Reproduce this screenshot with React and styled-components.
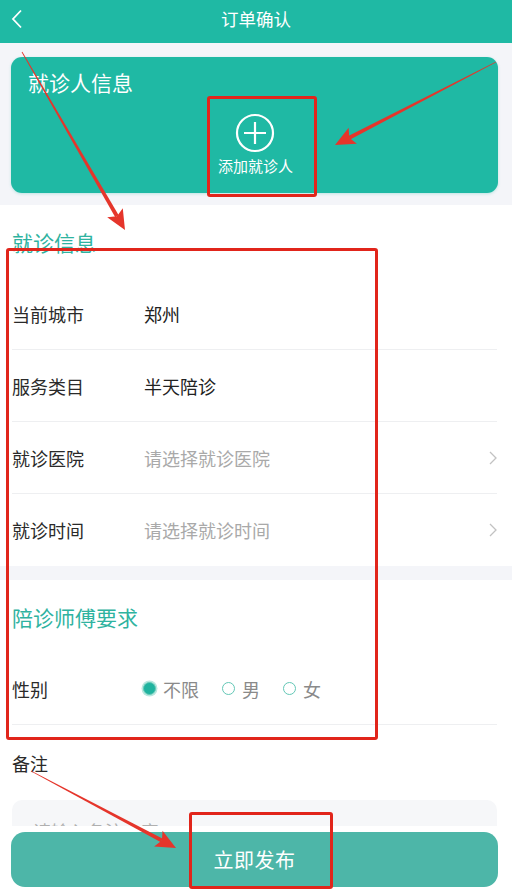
import React from "react";
import styled, { createGlobalStyle } from "styled-components";

const Global = createGlobalStyle`
  html, body { margin: 0; padding: 0; background: #fff; }
  body { font-family: "Noto Sans CJK SC", "Noto Sans", sans-serif; }
  * { box-sizing: border-box; }
`;

const TEAL = "#1fb9a4";

const Page = styled.div`
  position: relative;
  width: 512px;
  height: 891px;
  display: flex;
  flex-direction: column;
  overflow: hidden;
  background: #fff;
`;

const Header = styled.header`
  height: 43px;
  flex: none;
  background: ${TEAL};
  display: grid;
  grid-template-columns: 60px 1fr 60px;
  align-items: center;
  color: #fff;
`;

const BackBtn = styled.div`
  padding-left: 11px;
  display: flex;
  align-items: center;
  padding-bottom: 5px;
`;

const Title = styled.h1`
  margin: 0;
  text-align: center;
  font-size: 17.5px;
  font-weight: 400;
  line-height: 24px;
  padding-bottom: 6px;
`;

const Main = styled.main`
  flex: 1;
  overflow: hidden;
`;

const TopArea = styled.section`
  background: #f4f5f9;
  padding: 14px 14px 12px 11px;
`;

const PatientCard = styled.div`
  height: 136px;
  background: ${TEAL};
  border-radius: 11px;
  padding: 12px 17px 0;
  display: flex;
  flex-direction: column;
  color: #fff;
  box-shadow: 0 1px 3px rgba(31, 185, 164, 0.25);
`;

const CardTitle = styled.div`
  font-size: 21px;
  line-height: 26px;
`;

const AddPatient = styled.div`
  margin-top: 18px;
  align-self: center;
  display: flex;
  flex-direction: column;
  align-items: center;
  gap: 3px;
  margin-left: 2px;
`;

const AddText = styled.span`
  font-size: 15px;
  line-height: 20px;
`;

const SectionTitle = styled.div`
  height: 73px;
  padding-left: 12px;
  display: flex;
  align-items: center;
  font-size: 21px;
  color: #2fb3a0;
`;

const Row = styled.div`
  height: 72px;
  margin: 0 15px 0 12px;
  display: flex;
  align-items: center;
  border-bottom: ${(p) => (p.$noLine ? "none" : "1px solid #eeeff1")};
  font-size: 18px;
`;

const Label = styled.span`
  width: 132px;
  flex: none;
  color: #2a2a2a;
`;

const Value = styled.span`
  flex: 1;
  color: ${(p) => (p.$placeholder ? "#a9a9a9" : "#222")};
`;

const Band = styled.div`
  height: 14px;
  background: #f4f5f9;
`;

const RadioGroup = styled.div`
  display: flex;
  align-items: center;
  margin-left: -1px;
  gap: 23px;
`;

const RadioItem = styled.label`
  display: flex;
  align-items: center;
  gap: 7px;
  color: #8a8a8a;
  font-size: 18px;
`;

const RadioDot = styled.span`
  width: 13px;
  height: 13px;
  border-radius: 50%;
  border: 1.5px solid #63c7b6;
  background: ${(p) => (p.$checked ? "#1fb39f" : "#fff")};
  box-shadow: ${(p) => (p.$checked ? "0 0 0 1.5px #b8e8df" : "none")};
`;

const RemarkLabel = styled.div`
  height: 75px;
  padding-left: 12px;
  display: flex;
  align-items: center;
  font-size: 18px;
  color: #2a2a2a;
`;

const RemarkBox = styled.div`
  margin: 0 15px 0 12px;
  height: 120px;
  background: #f6f7f9;
  border-radius: 10px;
  padding: 19px 21px;
  font-size: 18px;
  line-height: 24px;
  color: #b0b0b0;
`;

const Footer = styled.footer`
  flex: none;
  height: 65px;
  background: #fff;
  padding: 6px 14px 4px 11px;
`;

const PublishButton = styled.button`
  width: 100%;
  height: 55px;
  border: none;
  border-radius: 14px;
  background: #4db6a8;
  color: #fff;
  font-family: inherit;
  font-size: 20px;
  letter-spacing: 0.5px;
`;

const Overlay = styled.div`
  position: absolute;
  inset: 0;
  pointer-events: none;
`;

const RedBox = styled.div`
  position: absolute;
  border: 3px solid #e1251b;
  border-radius: 3px;
`;

const Chevron = () => (
  <svg width="8" height="14" viewBox="0 0 8 14">
    <path d="M1 1l6 6-6 6" fill="none" stroke="#c2c2c2" strokeWidth="1.3" />
  </svg>
);

const Arrow = ({ x1, y1, x2, y2 }) => {
  const dx = x2 - x1;
  const dy = y2 - y1;
  const len = Math.hypot(dx, dy);
  const ux = dx / len;
  const uy = dy / len;
  const nx = -uy;
  const ny = ux;
  const headL = 20;
  const headW = 9;
  const bx = x2 - ux * headL;
  const by = y2 - uy * headL;
  const nb = 2;
  const sx = x2 - ux * (headL - 4);
  const sy = y2 - uy * (headL - 4);
  const shaft = [
    [x1 + nx * 0.4, y1 + ny * 0.4],
    [sx + nx * nb, sy + ny * nb],
    [sx - nx * nb, sy - ny * nb],
    [x1 - nx * 0.4, y1 - ny * 0.4],
  ];
  const head = [
    [x2, y2],
    [bx + nx * headW, by + ny * headW],
    [sx, sy],
    [bx - nx * headW, by - ny * headW],
  ];
  const pts = (a) => a.map((p) => p.join(",")).join(" ");
  return (
    <g fill="#e5352b">
      <polygon points={pts(shaft)} />
      <polygon points={pts(head)} />
    </g>
  );
};

export default function App() {
  const rows = [
    { label: "当前城市", value: "郑州" },
    { label: "服务类目", value: "半天陪诊" },
    { label: "就诊医院", value: "请选择就诊医院", ph: true, arrow: true },
    { label: "就诊时间", value: "请选择就诊时间", ph: true, arrow: true, last: true },
  ];
  return (
    <Page>
      <Global />
      <Header>
        <BackBtn>
          <svg width="12" height="20" viewBox="0 0 12 20">
            <path d="M10 1.5L2 10l8 8.5" fill="none" stroke="#fff" strokeWidth="1.8" />
          </svg>
        </BackBtn>
        <Title>订单确认</Title>
        <span />
      </Header>
      <Main>
        <TopArea>
          <PatientCard>
            <CardTitle>就诊人信息</CardTitle>
            <AddPatient>
              <svg width="40" height="40" viewBox="0 0 40 40">
                <circle cx="20" cy="20" r="18" fill="none" stroke="#fff" strokeWidth="2.2" />
                <path d="M20 9v22M9 20h22" stroke="#fff" strokeWidth="2.2" />
              </svg>
              <AddText>添加就诊人</AddText>
            </AddPatient>
          </PatientCard>
        </TopArea>
        <SectionTitle>就诊信息</SectionTitle>
        {rows.map((r) => (
          <Row key={r.label} $noLine={r.last}>
            <Label>{r.label}</Label>
            <Value $placeholder={r.ph}>{r.value}</Value>
            {r.arrow && <Chevron />}
          </Row>
        ))}
        <Band />
        <SectionTitle>陪诊师傅要求</SectionTitle>
        <Row>
          <Label>性别</Label>
          <RadioGroup>
            <RadioItem>
              <RadioDot $checked />
              不限
            </RadioItem>
            <RadioItem>
              <RadioDot />
              男
            </RadioItem>
            <RadioItem>
              <RadioDot />
              女
            </RadioItem>
          </RadioGroup>
        </Row>
        <RemarkLabel>备注</RemarkLabel>
        <RemarkBox>请输入备注内容</RemarkBox>
      </Main>
      <Footer>
        <PublishButton>立即发布</PublishButton>
      </Footer>
      <Overlay>
        <RedBox style={{ left: 207, top: 96, width: 110, height: 101 }} />
        <RedBox style={{ left: 6, top: 248, width: 372, height: 492 }} />
        <RedBox style={{ left: 189, top: 812, width: 144, height: 77 }} />
        <svg width="512" height="891" style={{ position: "absolute", left: 0, top: 0 }}>
          <Arrow x1={22} y1={52} x2={125} y2={230} />
          <Arrow x1={496} y1={62} x2={335} y2={145} />
          <Arrow x1={31} y1={771} x2={176} y2={848} />
        </svg>
      </Overlay>
    </Page>
  );
}
